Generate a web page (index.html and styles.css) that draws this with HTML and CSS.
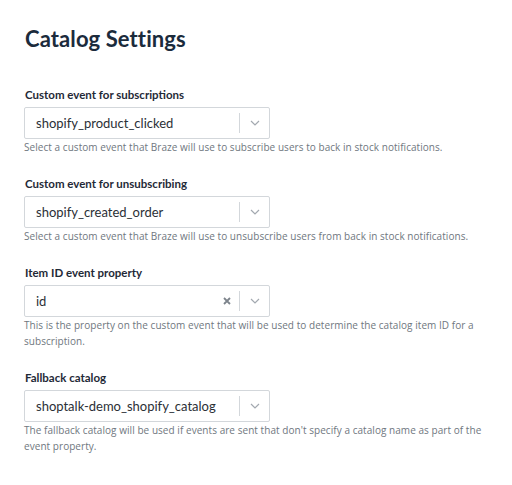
FILE: index.html
```html
<!DOCTYPE html>
<html>
<head>
<meta charset="utf-8">
<link rel="stylesheet" href="styles.css">
</head>
<body>
<main class="page">
  <h1 class="title">Catalog Settings</h1>

  <section class="field">
    <div class="label">Custom event for subscriptions</div>
    <div class="select">
      <span class="value">shopify_product_clicked</span>
      <span class="sep"></span>
      <span class="arrow"><svg width="10" height="6" viewBox="0 0 10 6"><path d="M1 1l4 4 4-4" fill="none" stroke="#a3a9b0" stroke-width="1.2"/></svg></span>
    </div>
    <p class="help">Select a custom event that Braze will use to subscribe users to back in stock notifications.</p>
  </section>

  <section class="field">
    <div class="label">Custom event for unsubscribing</div>
    <div class="select">
      <span class="value">shopify_created_order</span>
      <span class="sep"></span>
      <span class="arrow"><svg width="10" height="6" viewBox="0 0 10 6"><path d="M1 1l4 4 4-4" fill="none" stroke="#a3a9b0" stroke-width="1.2"/></svg></span>
    </div>
    <p class="help">Select a custom event that Braze will use to unsubscribe users from back in stock notifications.</p>
  </section>

  <section class="field">
    <div class="label">Item ID event property</div>
    <div class="select">
      <span class="value">id</span>
      <span class="clear"><svg width="8" height="8" viewBox="0 0 8 8"><path d="M1 1l6 6M7 1l-6 6" fill="none" stroke="#7d848c" stroke-width="1.8"/></svg></span>
      <span class="sep"></span>
      <span class="arrow"><svg width="10" height="6" viewBox="0 0 10 6"><path d="M1 1l4 4 4-4" fill="none" stroke="#a3a9b0" stroke-width="1.2"/></svg></span>
    </div>
    <p class="help">This is the property on the custom event that will be used to determine the catalog item ID for a subscription.</p>
  </section>

  <section class="field">
    <div class="label">Fallback catalog</div>
    <div class="select">
      <span class="value">shoptalk-demo_shopify_catalog</span>
      <span class="sep"></span>
      <span class="arrow"><svg width="10" height="6" viewBox="0 0 10 6"><path d="M1 1l4 4 4-4" fill="none" stroke="#a3a9b0" stroke-width="1.2"/></svg></span>
    </div>
    <p class="help">The fallback catalog will be used if events are sent that don't specify a catalog name as part of the event property.</p>
  </section>
</main>
</body>
</html>
```

FILE: styles.css
```css
html, body {
  margin: 0;
  padding: 0;
  background: #ffffff;
}

.page {
  padding: 25px 24px 0 24px;
  font-family: "Lato", "Open Sans", sans-serif;
  display: flex;
  flex-direction: column;
  gap: 21px;
}

.title {
  margin: 0 0 13px 1px;
  font-size: 22px;
  line-height: 28px;
  font-weight: 700;
  color: #1b2b3c;
  letter-spacing: 0.1px;
}

.field {
  display: flex;
  flex-direction: column;
}

.label {
  font-size: 11.5px;
  line-height: 16px;
  font-weight: 700;
  color: #1f2a37;
  margin-left: 1px;
  margin-bottom: 4px;
}

.select {
  width: 246px;
  height: 32px;
  box-sizing: border-box;
  border: 1px solid #d3d7db;
  border-radius: 2px;
  display: flex;
  align-items: center;
  padding-left: 11px;
}

.value {
  flex: 1;
  font-size: 13px;
  color: #2b3036;
}

.clear {
  display: flex;
  align-items: center;
  padding-right: 8px;
}

.sep {
  width: 1px;
  height: 20px;
  background: #d3d7db;
}

.arrow {
  width: 29px;
  display: flex;
  justify-content: center;
  align-items: center;
}

.help {
  margin: 0;
  font-family: "Open Sans", "Lato", sans-serif;
  font-size: 10px;
  letter-spacing: 0.05px;
  line-height: 16px;
  color: #6f7780;
}
```
